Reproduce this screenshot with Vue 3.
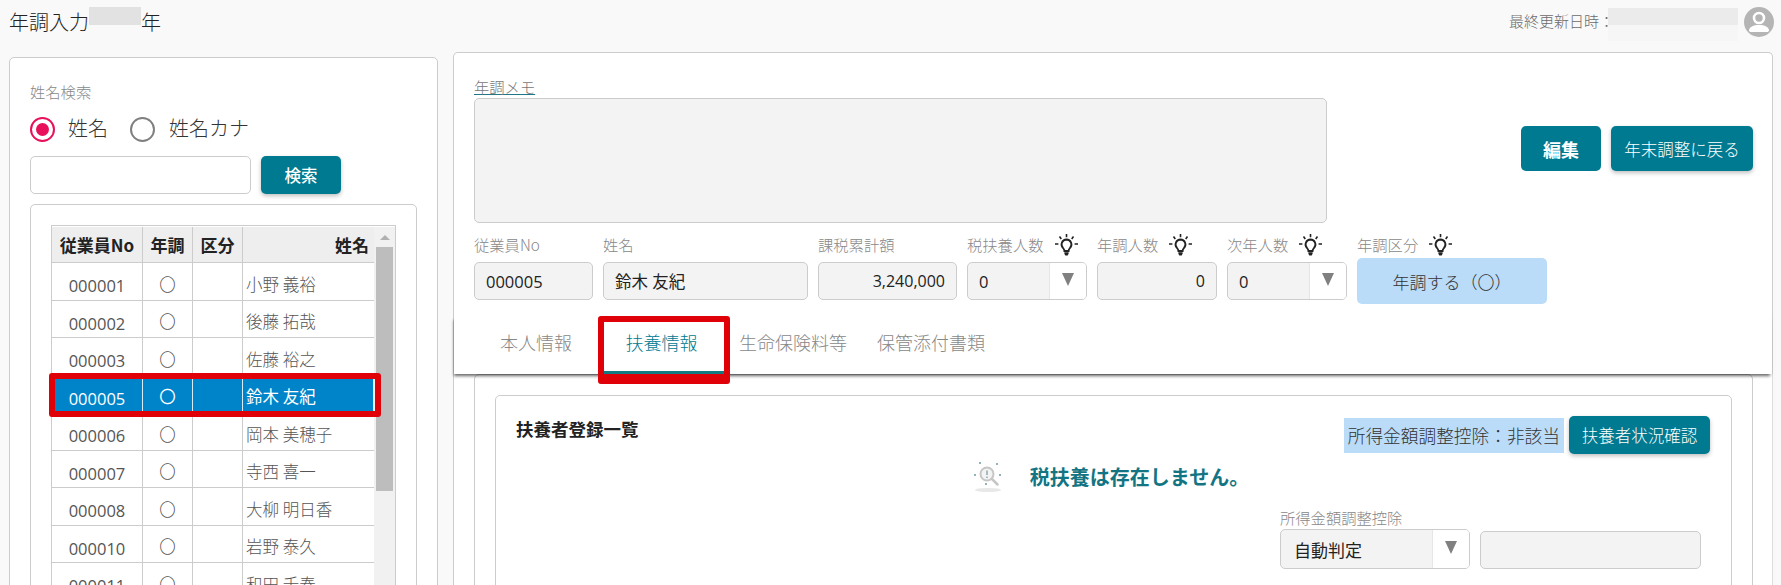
<script setup>
const rows = [
  { no: "000001", chosei: "〇", name: "小野 義裕" },
  { no: "000002", chosei: "〇", name: "後藤 拓哉" },
  { no: "000003", chosei: "〇", name: "佐藤 裕之" },
  { no: "000005", chosei: "〇", name: "鈴木 友紀", selected: true },
  { no: "000006", chosei: "〇", name: "岡本 美穂子" },
  { no: "000007", chosei: "〇", name: "寺西 喜一" },
  { no: "000008", chosei: "〇", name: "大柳 明日香" },
  { no: "000010", chosei: "〇", name: "岩野 泰久" },
  { no: "000011", chosei: "〇", name: "和田 千春" },
];
const tabs = ["本人情報", "扶養情報", "生命保険料等", "保管添付書類"];
const hints = ["税扶養人数", "年調人数", "次年人数", "年調区分"];
</script>

<template>
  <div class="page">
    <header class="top-bar">
      <div class="page-title">
        年調入力<span class="mask-year"></span>年
      </div>
      <div class="top-right">
        <span class="updated">最終更新日時：</span>
        <span class="mask-date"></span>
        <svg class="avatar" viewBox="0 0 30 30">
          <circle cx="15" cy="15" r="15" fill="#b5b5b5" />
          <circle cx="15" cy="11" r="5" fill="none" stroke="#fff" stroke-width="2.6" />
          <path d="M5 23.500c0-3.500 4.500-5.500 10-5.500s10 2 10 5.500l-1 1.500H6z" fill="#fff" />
        </svg>
      </div>
    </header>

    <main class="columns">
      <section class="search-card">
        <div class="field-label search-label">姓名検索</div>
        <div class="radios">
          <span class="radio radio--on"><i></i></span>
          <span class="radio-text">姓名</span>
          <span class="radio"></span>
          <span class="radio-text radio-text--kana">姓名カナ</span>
        </div>
        <div class="search-row">
          <div class="search-input"></div>
          <button class="btn btn-search">検索</button>
        </div>
        <div class="list-card">
          <div class="list-frame">
            <div class="list-table">
              <div class="list-row list-head">
                <div class="cell">従業員No</div>
                <div class="cell">年調</div>
                <div class="cell">区分</div>
                <div class="cell cell-name">姓名</div>
              </div>
              <div
                v-for="row in rows"
                :key="row.no"
                :class="['list-row', { selected: row.selected }]"
              >
                <div class="cell cell-no">{{ row.no }}</div>
                <div class="cell">{{ row.chosei }}</div>
                <div class="cell"></div>
                <div class="cell cell-name">{{ row.name }}</div>
                <div v-if="row.selected" class="row-mark"></div>
              </div>
            </div>
            <div class="scroll-track">
              <span class="scroll-arrow"></span>
              <span class="scroll-thumb"></span>
            </div>
          </div>
        </div>
      </section>

      <section class="detail">
        <div class="detail-head">
          <div class="memo-row">
            <div class="memo-col">
              <a class="memo-link">年調メモ</a>
              <div class="memo-box"></div>
            </div>
            <div class="head-actions">
              <button class="btn btn-edit">編集</button>
              <button class="btn btn-back">年末調整に戻る</button>
            </div>
          </div>

          <div class="fields">
            <div class="field w-no">
              <div class="field-label">従業員No</div>
              <div class="box">000005</div>
            </div>
            <div class="field w-name">
              <div class="field-label">姓名</div>
              <div class="box">鈴木 友紀</div>
            </div>
            <div class="field w-sum">
              <div class="field-label">課税累計額</div>
              <div class="box box--right">3,240,000</div>
            </div>
            <div class="field w-sel">
              <div class="field-label">
                {{ hints[0] }}
                <svg class="bulb" viewBox="0 0 23 22"><use href="#bulb-icon" /></svg>
              </div>
              <div class="box box--select"><span>0</span><b></b></div>
            </div>
            <div class="field w-sel">
              <div class="field-label">
                {{ hints[1] }}
                <svg class="bulb" viewBox="0 0 23 22"><use href="#bulb-icon" /></svg>
              </div>
              <div class="box box--right">0</div>
            </div>
            <div class="field w-sel">
              <div class="field-label">
                {{ hints[2] }}
                <svg class="bulb" viewBox="0 0 23 22"><use href="#bulb-icon" /></svg>
              </div>
              <div class="box box--select"><span>0</span><b></b></div>
            </div>
            <div class="field w-kbn">
              <div class="field-label">
                {{ hints[3] }}
                <svg class="bulb" viewBox="0 0 23 22"><use href="#bulb-icon" /></svg>
              </div>
              <div class="kbn-pill">年調する（〇）</div>
            </div>
          </div>

          <nav class="tabs">
            <button
              v-for="(tab, i) in tabs"
              :key="tab"
              :class="['tab', { active: i === 1 }]"
            >
              {{ tab }}
            </button>
          </nav>
        </div>

        <div class="detail-body">
          <div class="body-inner">
            <div class="dep-card">
              <div class="dep-top">
                <div class="dep-title">扶養者登録一覧</div>
                <div class="dep-actions">
                  <span class="dep-status">所得金額調整控除：非該当</span>
                  <button class="btn btn-check">扶養者状況確認</button>
                </div>
              </div>
              <div class="empty-msg">
                <svg class="empty-icon" viewBox="0 0 32 32">
                  <ellipse cx="15" cy="29" rx="13" ry="2" fill="#e8e8e8" />
                  <circle cx="14" cy="13" r="6.500" fill="#f3f3f3" stroke="#c6c6c6" stroke-width="2" />
                  <path d="M19 18l5.500 5.500" stroke="#c6c6c6" stroke-width="2.500" stroke-linecap="round" />
                  <path d="M14 9.500v4.500M14 15.500v1.500" stroke="#6f9aa3" stroke-width="1.200" />
                  <g fill="#6f9aa3">
                    <circle cx="7" cy="2" r="1" />
                    <circle cx="24" cy="3" r="1" />
                    <circle cx="2" cy="14" r="1" />
                    <circle cx="27" cy="14" r="1" />
                    <circle cx="13" cy="23" r="1" />
                  </g>
                </svg>
                <span>税扶養は存在しません。</span>
              </div>
              <div class="adjust">
                <div class="field-label">所得金額調整控除</div>
                <div class="adjust-row">
                  <div class="box box--select adjust-select"><span>自動判定</span><b></b></div>
                  <div class="box adjust-input"></div>
                </div>
              </div>
            </div>
          </div>
        </div>
      </section>
    </main>

    <svg class="icon-defs" aria-hidden="true">
      <symbol id="bulb-icon" viewBox="0 0 23 22">
        <path d="M11.500 5.500a5 5 0 0 0-3.400 8.600c.9.900 1.300 1.700 1.300 2.900h4.200c0-1.200.4-2 1.300-2.900a5 5 0 0 0-3.400-8.600z" fill="none" stroke="#222" stroke-width="1.800" />
        <path d="M9.400 18.300h4.200v1.500l-.9 1.700h-2.400l-.9-1.700z" fill="#222" />
        <path d="M11.500 0v3.200M4.500 2.500l1.800 2.400M18.500 2.500l-1.800 2.400M0 10h3.400M19.600 10h3.400" stroke="#222" stroke-width="1.600" />
      </symbol>
    </svg>
  </div>
</template>

<style>
html,
body {
  margin: 0;
  background: #f9f9f9;
  overflow: hidden;
}
</style>

<style scoped>
.page {
  width: 1781px;
  height: 585px;
  overflow: hidden;
  background: #f9f9f9;
  color: #333;
  font-family: "Noto Sans CJK JP", "Liberation Sans", sans-serif;
  font-weight: 300;
}

.icon-defs {
  width: 0;
  height: 0;
  position: absolute;
}

.top-bar {
  height: 45px;
  display: flex;
  justify-content: space-between;
  align-items: flex-start;
  padding: 0 7px 0 9px;
}

.page-title {
  display: flex;
  align-items: center;
  height: 42px;
  font-size: 20px;
  color: #222;
}

.mask-year {
  width: 52px;
  height: 18px;
  background: #e2e2e2;
  margin-top: -10px;
}

.top-right {
  display: flex;
  align-items: flex-start;
  padding-top: 7px;
}

.updated {
  width: 99px;
  font-size: 15px;
  line-height: 30px;
  height: 30px;
  margin-top: -1px;
  color: #6b6b6b;
  white-space: nowrap;
}

.mask-date {
  width: 130px;
  height: 33px;
  margin-top: 1px;
  background: linear-gradient(#ebebeb 0 17px, #f6f6f6 17px 100%);
  position: relative;
}

.avatar {
  width: 30px;
  height: 30px;
  margin-left: 6px;
}

.columns {
  display: flex;
  align-items: flex-start;
  padding-left: 9px;
}

.search-card {
  box-sizing: border-box;
  width: 429px;
  height: 560px;
  margin-top: 12px;
  padding: 24px 20px 0;
  background: #fff;
  border: 1px solid #ccc;
  border-radius: 5px;
}

.field-label {
  font-size: 15.300px;
  color: #888;
  line-height: 18px;
  white-space: nowrap;
}

.search-label {
  height: 18px;
}

.radios {
  display: flex;
  align-items: center;
  height: 26px;
  margin-top: 16px;
}

.radio {
  box-sizing: border-box;
  width: 25px;
  height: 25px;
  border: 2.500px solid #808080;
  border-radius: 50%;
  display: flex;
  align-items: center;
  justify-content: center;
}

.radio--on {
  border-color: #e8105a;
}

.radio--on i {
  width: 13px;
  height: 13px;
  border-radius: 50%;
  background: #e8105a;
}

.radio-text {
  font-size: 20px;
  color: #333;
  line-height: 24px;
  margin: 0 22px 2px 13px;
}

.radio-text--kana {
  margin-left: 14px;
}

.search-row {
  display: flex;
  gap: 10px;
  margin-top: 14px;
}

.search-input {
  box-sizing: border-box;
  width: 221px;
  height: 38px;
  background: #fff;
  border: 1px solid #ccc;
  border-radius: 5px;
}

.btn {
  border: none;
  border-radius: 5px;
  background: #007a91;
  color: #fff;
  font-family: inherit;
  box-shadow: 0 2px 4px rgb(0 0 0 / 0.25);
}

.btn-search {
  width: 80px;
  height: 38px;
  font-size: 16.500px;
  font-weight: 500;
}

.list-card {
  box-sizing: border-box;
  width: 387px;
  height: 400px;
  margin-top: 10px;
  padding: 20px 20px 0;
  background: #fff;
  border: 1px solid #ccc;
  border-radius: 5px;
}

.list-frame {
  box-sizing: border-box;
  width: 345px;
  height: 380px;
  display: flex;
  border: 1px solid #ccc;
  border-bottom: none;
  padding-top: 1px;
}

.list-table {
  width: 322px;
  flex-shrink: 0;
}

.list-row {
  position: relative;
  display: grid;
  grid-template-columns: 91px 50px 50px 131px;
  height: 37.500px;
  box-sizing: border-box;
  border-bottom: 1px solid #ccc;
  font-size: 16.500px;
  color: #555;
}

.list-head {
  height: 36px;
  background: #eeeeee;
  color: #222;
  font-weight: 700;
  font-size: 17px;
}

.cell {
  display: flex;
  align-items: center;
  justify-content: center;
  border-right: 1px solid #ccc;
  white-space: nowrap;
}

.cell:last-child {
  border-right: none;
}

.list-row:not(.list-head) .cell {
  padding-top: 5px;
}

.list-row:not(.list-head) .cell-no {
  font-family: "Open Sans", "Liberation Sans", sans-serif;
  font-size: 16.500px;
  font-weight: 400;
  padding-top: 9px;
}

.cell-name {
  justify-content: flex-start;
  padding-left: 3px;
}

.list-head .cell-name {
  justify-content: flex-end;
  padding: 0 5px 0 0;
}

.list-row.selected {
  background: #0084c9;
  color: #fff;
  font-weight: 400;
  box-shadow: inset -1px 0 #fff;
}

.list-row.selected .cell {
  border-right-color: #d8ecf7;
}

.row-mark {
  position: absolute;
  z-index: 2;
  left: -3px;
  top: -2.500px;
  width: 332px;
  height: 44px;
  box-sizing: border-box;
  border: 6px solid #e00008;
  border-radius: 3px;
}

.scroll-track {
  width: 21px;
  background: #f1f1f1;
  position: relative;
  padding: 20px 2px 0;
  box-sizing: border-box;
}

.scroll-arrow {
  position: absolute;
  left: 6px;
  top: 8px;
  border-left: 5px solid transparent;
  border-right: 5px solid transparent;
  border-bottom: 5px solid #b0b0b0;
}

.scroll-thumb {
  display: block;
  height: 244px;
  background: #bdbdbd;
}

.detail {
  width: 1320px;
  margin-left: 15px;
}

.detail-head {
  position: relative;
  z-index: 1;
  box-sizing: border-box;
  display: flex;
  flex-direction: column;
  width: 1320px;
  height: 322px;
  margin-top: 7px;
  background: #fff;
  border: 1px solid #ccc;
  border-bottom: none;
  border-radius: 5px 5px 0 0;
}

.memo-row {
  display: flex;
  justify-content: space-between;
  padding: 24px 19px 0 20px;
}

.memo-link {
  display: block;
  width: 62px;
  font-size: 15.300px;
  line-height: 18px;
  color: #777;
  text-decoration: underline;
  text-decoration-color: #1f7686;
  white-space: nowrap;
}

.memo-box {
  box-sizing: border-box;
  width: 853px;
  height: 125px;
  margin-top: 3px;
  background: #f4f3f3;
  border: 1px solid #ccc;
  border-radius: 5px;
}

.head-actions {
  display: flex;
  gap: 10px;
  padding-top: 49px;
}

.btn-edit {
  width: 80px;
  height: 45px;
  font-size: 18px;
  font-weight: 700;
  box-shadow: none;
}

.btn-back {
  width: 142px;
  height: 45px;
  font-size: 16.500px;
  font-weight: 300;
}

.fields {
  display: flex;
  align-items: flex-start;
  gap: 10px;
  margin-top: 14px;
  padding-left: 20px;
}

.field .field-label {
  display: flex;
  align-items: center;
  height: 13px;
  margin-bottom: 12px;
}

.box {
  box-sizing: border-box;
  display: flex;
  align-items: center;
  height: 38px;
  padding: 0 11px;
  background: #f4f3f3;
  border: 1px solid #ccc;
  border-radius: 5px;
  font-family: "Open Sans", "Noto Sans CJK JP", sans-serif;
  font-size: 16.500px;
  font-weight: 400;
  color: #222;
  white-space: nowrap;
}

.box--right {
  justify-content: flex-end;
  font-size: 16px;
}

.box--select {
  position: relative;
  padding-right: 0;
  overflow: hidden;
}

.box--select span {
  flex: 1;
}

.box--select b {
  width: 37px;
  height: 100%;
  background: #fff;
  border-left: 1px solid #e6e6e6;
  display: flex;
  align-items: center;
  justify-content: center;
  flex-shrink: 0;
  box-sizing: border-box;
}

.box--select b::after {
  content: "";
  border-left: 6px solid transparent;
  border-right: 6px solid transparent;
  border-top: 13px solid #808080;
  margin-top: -4px;
}

.w-no { width: 119px; }
.w-name { width: 205px; }
.w-sum { width: 139px; }
.w-sel { width: 120px; }
.w-kbn { width: 190px; }

.bulb {
  width: 23px;
  height: 22px;
  margin: 3px 0 0 11px;
  flex-shrink: 0;
}

.kbn-pill {
  display: flex;
  align-items: center;
  justify-content: center;
  height: 46px;
  margin-top: -4px;
  background: #bbdcf8;
  border-radius: 5px;
  font-size: 17px;
  color: #333;
}

.tabs {
  display: flex;
  margin-top: auto;
  padding: 3px 0 0 31px;
  background: #fff;
  box-shadow: -1px 3px 3px -1px rgb(0 0 0 / 0.6);
}

.tab {
  box-sizing: border-box;
  position: relative;
  height: 55px;
  padding: 0 15px 10px;
  border: none;
  background: none;
  font-family: inherit;
  font-size: 18px;
  font-weight: 300;
  color: #888;
  white-space: nowrap;
}

.tab.active {
  color: #007a91;
  width: 121px;
  margin-left: 16px;
  padding: 0 4px 7px 0;
  border-bottom: 3px solid #127a82;
}

.tab.active::after {
  content: "";
  position: absolute;
  left: -5px;
  right: -6px;
  top: -3px;
  bottom: -13px;
  border: 6px solid #e00008;
  border-bottom-width: 10px;
  border-radius: 3px;
  pointer-events: none;
}

.detail-body {
  box-sizing: border-box;
  width: 1320px;
  height: 300px;
  padding: 0 19px 0 20px;
  background: #fff;
  border-left: 1px solid #ccc;
  border-right: 1px solid #ddd;
}

.body-inner {
  box-sizing: border-box;
  height: 300px;
  padding: 20px 20px 0;
  background: #fff;
  border: 1px solid #ccc;
  border-radius: 5px;
}

.dep-card {
  box-sizing: border-box;
  height: 280px;
  background: #fff;
  border: 1px solid #ccc;
  border-radius: 5px;
  padding: 21px 21px 0 20px;
}

.dep-top {
  display: flex;
  justify-content: space-between;
  align-items: flex-start;
  height: 37px;
}

.dep-title {
  font-size: 17.500px;
  font-weight: 700;
  color: #222;
  line-height: 24px;
}

.dep-actions {
  display: flex;
  align-items: center;
  gap: 5px;
  margin-top: -1px;
}

.dep-status {
  display: flex;
  align-items: center;
  height: 35px;
  padding: 0 4px;
  background: #bbdcf8;
  font-size: 17.700px;
  color: #333;
  white-space: nowrap;
}

.btn-check {
  width: 141px;
  height: 38px;
  font-size: 16.500px;
  font-weight: 300;
}

.empty-msg {
  display: flex;
  align-items: center;
  justify-content: center;
  gap: 25px;
  margin-top: 2px;
  height: 40px;
  padding-right: 4px;
  font-size: 20px;
  font-weight: 700;
  color: #137583;
}

.empty-icon {
  width: 32px;
  height: 32px;
  margin-top: 2px;
}

.adjust {
  margin: 12px 0 0 764px;
}

.adjust-row {
  display: flex;
  align-items: flex-end;
  gap: 10px;
  margin-top: 3px;
}

.adjust-select {
  width: 190px;
  height: 40px;
  font-size: 17px;
  padding-left: 13px;
}

.adjust-input {
  width: 221px;
}
</style>
